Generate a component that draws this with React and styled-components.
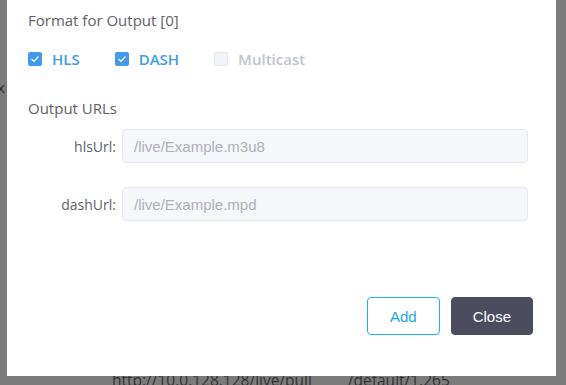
import React from 'react';
import styled, { createGlobalStyle } from 'styled-components';

const GlobalStyle = createGlobalStyle`
  html, body {
    margin: 0;
    padding: 0;
    background: #7b7b7b;
    overflow: hidden;
  }
`

const Page = styled.div`
  width: 566px;
  height: 385px;
  display: flex;
  flex-direction: column;
  overflow: hidden;
  font-family: "Open Sans", sans-serif;
`

const Stage = styled.div`
  display: flex;
  align-items: flex-start;
`

const Gutter = styled.div`
  width: 7px;
  flex: none;
  overflow: hidden;
  padding-top: 77px;
  color: #2e2e2e;
  font-size: 15px;
  line-height: 20px;
  text-indent: -3px;
`

const Modal = styled.div`
  position: relative;
  z-index: 1;
  width: 549px;
  height: 376px;
  box-sizing: border-box;
  background: #fff;
  display: flex;
  flex-direction: column;
  padding: 10px 23px 0 21px;
`

const Heading = styled.div`
  margin-top: ${props => props.$top || 0}px;
  font-size: 15px;
  line-height: 20px;
  color: #606266;
`

const CheckRow = styled.div`
  display: flex;
  align-items: center;
  height: 20px;
  margin-top: 19px;
`

const Check = styled.label`
  display: flex;
  align-items: center;
  margin-right: 35px;
  font-size: 15px;
  font-weight: 600;
  color: ${props => props.$disabled ? '#c0c4cc' : '#4299f0'};
`

const Box = styled.span`
  width: 14px;
  height: 14px;
  box-sizing: border-box;
  border-radius: 2px;
  margin-right: 10px;
  display: flex;
  align-items: center;
  justify-content: center;
  background: ${props => props.$checked ? '#4299f0' : '#f2f4f8'};
  border: 1px solid ${props => props.$checked ? '#4299f0' : '#e1e4ea'};
`

const Form = styled.div`
  display: flex;
  flex-direction: column;
  gap: 24px;
  margin-top: 11px;
  padding-right: 5px;
`

const Row = styled.div`
  display: flex;
  align-items: center;
  gap: 6px;
`

const Label = styled.span`
  width: 88px;
  text-align: right;
  font-size: 14px;
  color: #606266;
`

const Input = styled.input`
  flex: 1;
  height: 34px;
  box-sizing: border-box;
  border: 1px solid #e4e7ed;
  border-radius: 4px;
  background: #f5f7fa;
  padding: 0 11px;
  font-family: "Liberation Sans", Arial, sans-serif;
  font-size: 15px;
  outline: none;

  &::placeholder {
    color: #adb0b8;
  }
`

const Footer = styled.div`
  display: flex;
  justify-content: flex-end;
  gap: 11px;
  margin-top: 76px;
`

const Button = styled.button`
  height: 38px;
  box-sizing: border-box;
  padding: 0 ${props => props.$dark ? 21 : 22}px;
  border-radius: 4px;
  font-family: "Liberation Sans", Arial, sans-serif;
  font-size: 15px;
  border: 1px solid ${props => props.$dark ? '#4b4c5e' : '#1fb3df'};
  background: ${props => props.$dark ? '#4b4c5e' : '#fff'};
  color: ${props => props.$dark ? '#fff' : '#1aa8dc'};
  cursor: pointer;
`

const Behind = styled.div`
  display: flex;
  height: 9px;
  margin-top: -6px;
  font-size: 15.5px;
  line-height: 20px;
  color: #333;
  white-space: nowrap;
`

const BehindText = styled.span`
  padding-left: ${props => props.$left}px;
`

const Tick = () => (
  <svg width="10" height="8" viewBox="0 0 10 8">
    <path d="M1.5 4 L4 6.3 L8.5 1.5" fill="none" stroke="#fff" strokeWidth="1.3" />
  </svg>
)

export default function App() {
  return (
    <Page>
      <GlobalStyle />
      <Stage>
        <Gutter>x</Gutter>
        <Modal>
          <Heading>Format for Output [0]</Heading>
          <CheckRow>
            <Check><Box $checked><Tick /></Box>HLS</Check>
            <Check><Box $checked><Tick /></Box>DASH</Check>
            <Check $disabled><Box />Multicast</Check>
          </CheckRow>
          <Heading $top={29}>Output URLs</Heading>
          <Form>
            <Row>
              <Label>hlsUrl:</Label>
              <Input placeholder="/live/Example.m3u8" />
            </Row>
            <Row>
              <Label>dashUrl:</Label>
              <Input placeholder="/live/Example.mpd" />
            </Row>
          </Form>
          <Footer>
            <Button>Add</Button>
            <Button $dark>Close</Button>
          </Footer>
        </Modal>
      </Stage>
      <Behind>
        <BehindText $left={112}>http://10.0.128.128/live/pull</BehindText>
        <BehindText $left={36}>/default/1.265</BehindText>
      </Behind>
    </Page>
  )
}
